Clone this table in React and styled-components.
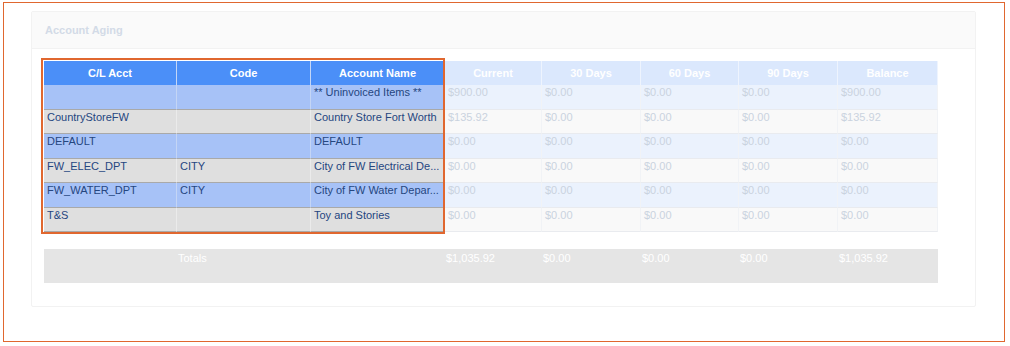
import React from "react";
import styled, { createGlobalStyle } from "styled-components";

const GlobalStyles = createGlobalStyle`
  html, body {
    margin: 0;
    padding: 0;
    background: #ffffff;
  }
  body {
    font-family: "Liberation Sans", Arial, Helvetica, sans-serif;
  }
`;

const Frame = styled.div`
  box-sizing: border-box;
  margin: 2px 0 0 3px;
  width: 1002px;
  height: 340px;
  border: 1px solid #e0672f;
  padding: 8px 0 0 27px;
`;

const Panel = styled.section`
  box-sizing: border-box;
  width: 945px;
  height: 296px;
  border: 1px solid #f2f2f2;
  border-radius: 2px;
  background: #ffffff;
`;

const PanelHeader = styled.header`
  box-sizing: border-box;
  height: 37px;
  padding: 0 13px;
  display: flex;
  align-items: center;
  background: #fafafa;
  border-bottom: 1px solid #f2f2f2;
  font-size: 11px;
  font-weight: bold;
  color: #d3dbe7;
`;

const PanelBody = styled.div`
  padding: 12px 0 0 12px;
`;

const TableWrap = styled.div`
  position: relative;
  width: 894px;
`;

const Grid = styled.div`
  display: grid;
  grid-template-columns: 133px 134px 134px 97px 99px 98px 99px 100px;
`;

const HeadCell = styled.div`
  box-sizing: border-box;
  height: 24px;
  display: flex;
  align-items: center;
  justify-content: center;
  font-size: 11px;
  font-weight: bold;
  color: #ffffff;
  background: ${(p) => (p.$focus ? "#4b8ff8" : "#dbe8fd")};
  border-right: 1px solid ${(p) => (p.$focus ? "#c3d6f7" : "#eef4fe")};
  &:last-child {
    border-right: none;
  }
`;

const Cell = styled.div`
  box-sizing: border-box;
  height: 24.5px;
  padding: 0 3px;
  font-size: 11px;
  line-height: 15px;
  white-space: nowrap;
  overflow: hidden;
  color: ${(p) => (p.$focus ? "#25467f" : "#cad3df")};
  background: ${(p) =>
    p.$focus
      ? p.$odd
        ? "#a7c2f7"
        : "#dfdfdf"
      : p.$odd
      ? "#ebf2fd"
      : "#f9f9f9"};
  border-bottom: ${(p) =>
    p.$focus ? "1.5px solid #a9a9a9" : "1px solid #e9ebef"};
  border-right: 1px solid
    ${(p) => (p.$focus ? (p.$odd ? "#c4d5f5" : "#ebebeb") : "#f1f3f6")};
`;

const Highlight = styled.div`
  position: absolute;
  left: -3px;
  top: -3px;
  width: 404px;
  height: 176px;
  box-sizing: border-box;
  border: 2px solid #e0672f;
  pointer-events: none;
`;

const TotalsRow = styled.div`
  display: grid;
  grid-template-columns: 133px 134px 134px 97px 99px 98px 99px 100px;
  width: 894px;
  height: 34px;
  margin-top: 17px;
  background: #e5e5e5;
`;

const TotalCell = styled.div`
  padding: 2px 1px 0;
  font-size: 11px;
  line-height: 14px;
  color: #ffffff;
`;

const columns = [
  "C/L Acct",
  "Code",
  "Account Name",
  "Current",
  "30 Days",
  "60 Days",
  "90 Days",
  "Balance",
];

const rows = [
  ["", "", "** Uninvoiced Items **", "$900.00", "$0.00", "$0.00", "$0.00", "$900.00"],
  ["CountryStoreFW", "", "Country Store Fort Worth", "$135.92", "$0.00", "$0.00", "$0.00", "$135.92"],
  ["DEFAULT", "", "DEFAULT", "$0.00", "$0.00", "$0.00", "$0.00", "$0.00"],
  ["FW_ELEC_DPT", "CITY", "City of FW Electrical De...", "$0.00", "$0.00", "$0.00", "$0.00", "$0.00"],
  ["FW_WATER_DPT", "CITY", "City of FW Water Depar...", "$0.00", "$0.00", "$0.00", "$0.00", "$0.00"],
  ["T&S", "", "Toy and Stories", "$0.00", "$0.00", "$0.00", "$0.00", "$0.00"],
];

const totals = ["", "Totals", "", "$1,035.92", "$0.00", "$0.00", "$0.00", "$1,035.92"];

export default function App() {
  return (
    <>
      <GlobalStyles />
      <Frame>
        <Panel>
          <PanelHeader>Account Aging</PanelHeader>
          <PanelBody>
            <TableWrap>
              <Grid>
                {columns.map((c, i) => (
                  <HeadCell key={c} $focus={i < 3}>
                    {c}
                  </HeadCell>
                ))}
                {rows.map((r, ri) =>
                  r.map((v, ci) => (
                    <Cell key={ri + "-" + ci} $focus={ci < 3} $odd={ri % 2 === 0}>
                      {v}
                    </Cell>
                  ))
                )}
              </Grid>
              <Highlight />
            </TableWrap>
            <TotalsRow>
              {totals.map((v, i) => (
                <TotalCell key={i}>{v}</TotalCell>
              ))}
            </TotalsRow>
          </PanelBody>
        </Panel>
      </Frame>
    </>
  );
}
